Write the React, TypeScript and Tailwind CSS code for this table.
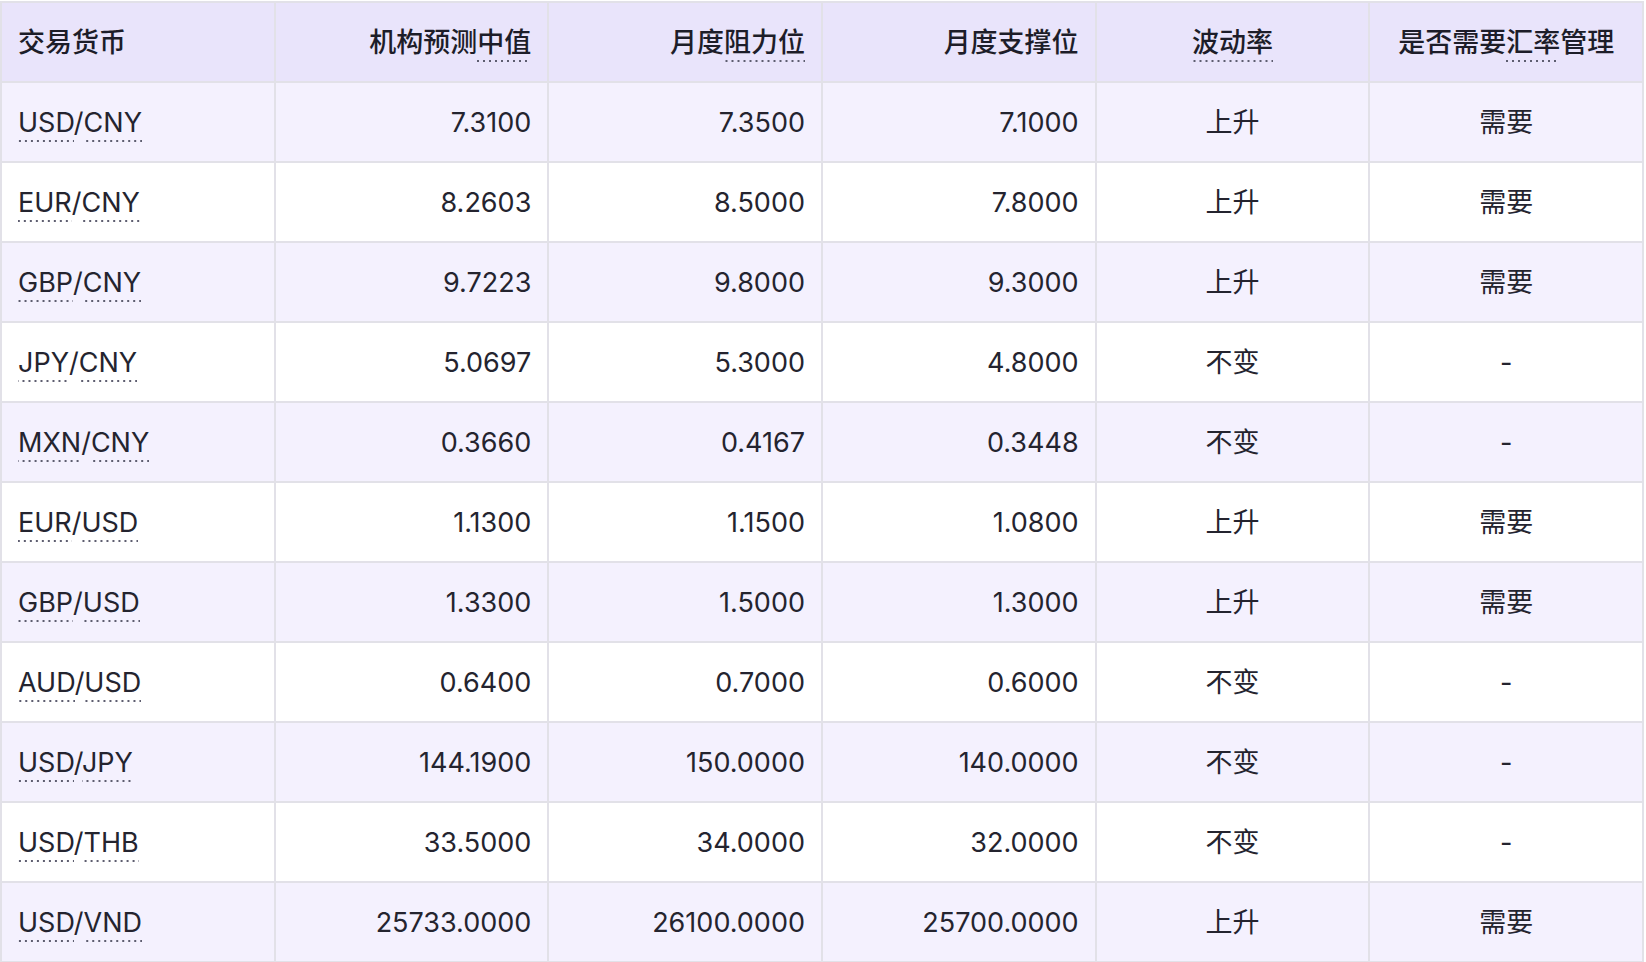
const rows = [
  { pair: ['USD', 'CNY'], mid: '7.3100', res: '7.3500', sup: '7.1000', vol: '上升', need: '需要' },
  { pair: ['EUR', 'CNY'], mid: '8.2603', res: '8.5000', sup: '7.8000', vol: '上升', need: '需要' },
  { pair: ['GBP', 'CNY'], mid: '9.7223', res: '9.8000', sup: '9.3000', vol: '上升', need: '需要' },
  { pair: ['JPY', 'CNY'], mid: '5.0697', res: '5.3000', sup: '4.8000', vol: '不变', need: '-' },
  { pair: ['MXN', 'CNY'], mid: '0.3660', res: '0.4167', sup: '0.3448', vol: '不变', need: '-' },
  { pair: ['EUR', 'USD'], mid: '1.1300', res: '1.1500', sup: '1.0800', vol: '上升', need: '需要' },
  { pair: ['GBP', 'USD'], mid: '1.3300', res: '1.5000', sup: '1.3000', vol: '上升', need: '需要' },
  { pair: ['AUD', 'USD'], mid: '0.6400', res: '0.7000', sup: '0.6000', vol: '不变', need: '-' },
  { pair: ['USD', 'JPY'], mid: '144.1900', res: '150.0000', sup: '140.0000', vol: '不变', need: '-' },
  { pair: ['USD', 'THB'], mid: '33.5000', res: '34.0000', sup: '32.0000', vol: '不变', need: '-' },
  { pair: ['USD', 'VND'], mid: '25733.0000', res: '26100.0000', sup: '25700.0000', vol: '上升', need: '需要' },
]

// spaced dotted underline, like the glossary terms in the source
function Term({ children }: { children: React.ReactNode }) {
  return (
    <span className="bg-[linear-gradient(to_right,#5e5e70_34%,transparent_0)] bg-[length:6px_2px] bg-bottom bg-repeat-x pb-[3px]">
      {children}
    </span>
  )
}

export default function App() {
  const th = 'h-[80px] border-2 border-[#e2e1e8] px-[16px] font-medium text-[#1d1d29]'
  const td = 'h-[80px] border-2 border-[#e2e1e8] px-[16px] text-[#24242f]'
  return (
    <div
      className="bg-white w-[1646px] h-[962px] overflow-hidden pt-px"
      style={{ fontFamily: 'Inter, "Noto Sans CJK SC", sans-serif' }}
    >
      <table className="w-[1644px] border-collapse table-fixed text-[27px] leading-none">
        <thead>
          <tr className="bg-[#e9e4fb]">
            <th className={`${th} text-left`}>交易货币</th>
            <th className={`${th} text-right`}>机构预测<Term>中值</Term></th>
            <th className={`${th} text-right`}>月度<Term>阻力位</Term></th>
            <th className={`${th} text-right`}>月度支撑位</th>
            <th className={`${th} text-center`}><Term>波动率</Term></th>
            <th className={`${th} text-center`}>是否需要<Term>汇率</Term>管理</th>
          </tr>
        </thead>
        <tbody>
          {rows.map((r, i) => (
            <tr key={r.pair.join('/')} className={i % 2 === 0 ? 'bg-[#f4f1fe]' : 'bg-white'}>
              <td className={`${td} text-left`}>
                <Term>{r.pair[0]}</Term>/<Term>{r.pair[1]}</Term>
              </td>
              <td className={`${td} text-right`}>{r.mid}</td>
              <td className={`${td} text-right`}>{r.res}</td>
              <td className={`${td} text-right`}>{r.sup}</td>
              <td className={`${td} text-center`}>{r.vol}</td>
              <td className={`${td} text-center`}>{r.need}</td>
            </tr>
          ))}
        </tbody>
      </table>
    </div>
  )
}
